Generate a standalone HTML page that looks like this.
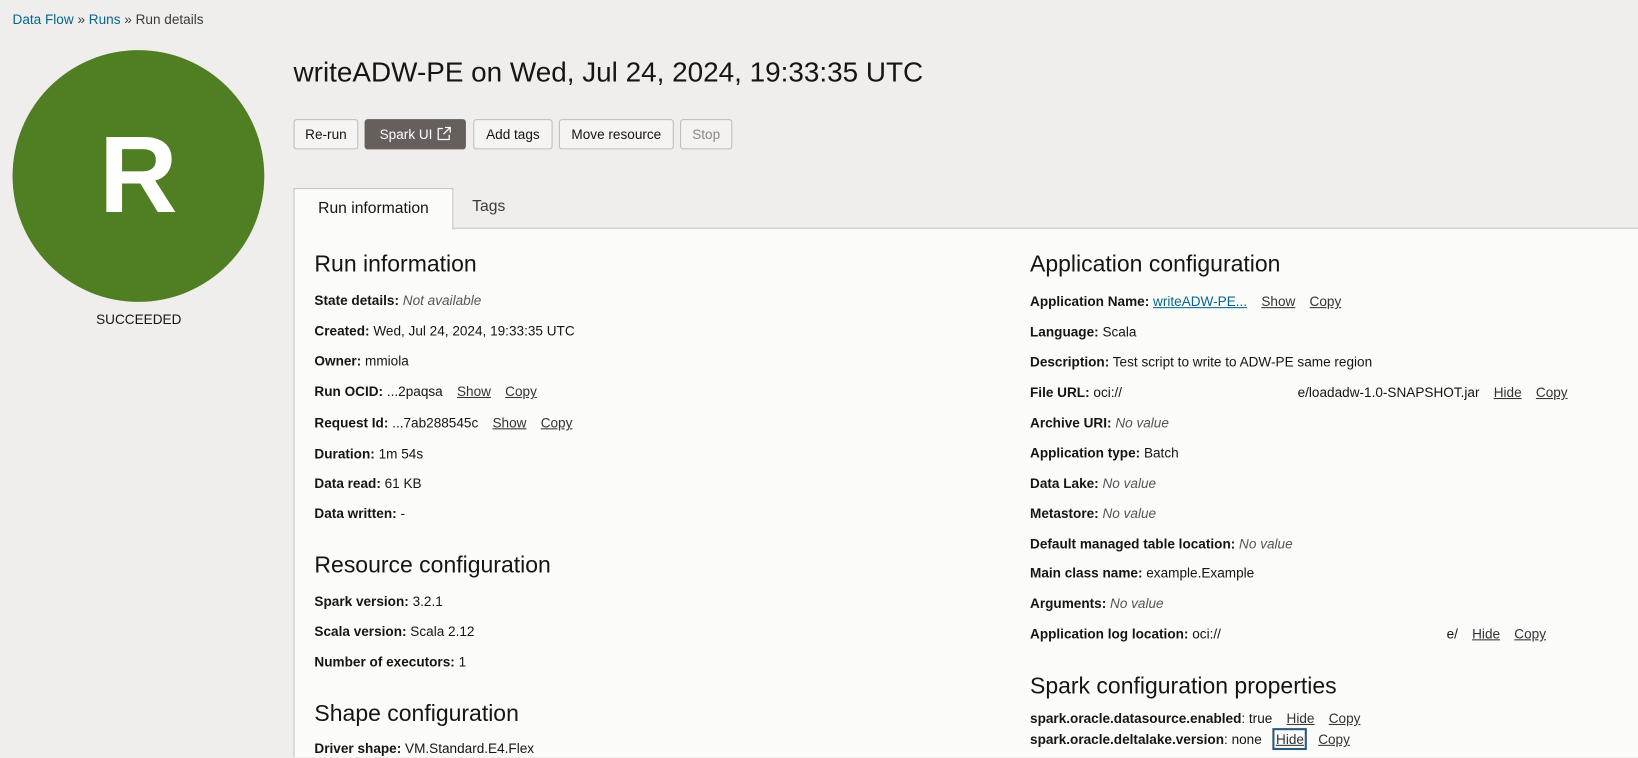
<!DOCTYPE html>
<html><head><meta charset="utf-8"><style>
*{margin:0;padding:0;box-sizing:border-box}
html,body{width:1638px;height:758px;overflow:hidden;background:#efeeec}
#w{position:absolute;left:0;top:0;width:1568px;height:725px;transform:scale(1.04464);transform-origin:0 0;font-family:"Liberation Sans",sans-serif;color:#161513;overflow:hidden}
.a{position:absolute;white-space:nowrap}
.bc{left:12px;top:11px;font-size:13px;color:#3a3a3a}
.bc a{color:#04668c;text-decoration:none}
.circle{left:12px;top:48px;width:241px;height:241px;border-radius:50%;background:#4f7e23;color:#fff;font-size:104px;font-weight:bold;text-align:center;line-height:241px}
.succ{left:92px;top:298px;font-size:13px;color:#161513}
h1{position:absolute;left:281px;top:54px;font-size:26.7px;font-weight:normal;white-space:nowrap}
.btn{position:absolute;top:114px;height:29px;border:1px solid #bfbdb8;border-radius:3px;background:#f5f4f2;font-size:13px;line-height:27px;text-align:center;color:#161513}
.tab{left:281px;top:180px;width:153px;height:40px;border:1px solid #c6c4bf;border-bottom:none;background:#fbfbfa;font-size:15px;text-align:center;line-height:38px;z-index:2}
.panel{left:281px;top:218px;width:1287px;height:507px;border-left:1px solid #c6c4bf;border-top:1px solid #c6c4bf;background:#fbfbfa}
h2{position:absolute;font-size:22px;font-weight:normal;white-space:nowrap}
.r{position:absolute;font-size:13px;white-space:nowrap}
.r b{font-weight:bold}
.r i{color:#555}
.l{color:#333;text-decoration:underline;margin-left:10px}
.lk{color:#04668c;text-decoration:underline}
</style></head><body><div id="w">
<div class="a bc"><a>Data Flow</a> » <a>Runs</a> » Run details</div>
<div class="a circle">R</div>
<div class="a succ">SUCCEEDED</div>
<h1>writeADW-PE on Wed, Jul 24, 2024, 19:33:35 UTC</h1>
<div class="btn" style="left:281px;width:62px">Re-run</div>
<div class="btn" style="left:349px;width:97px;background:#665f5b;border-color:#665f5b;color:#fff">Spark UI <svg width="14" height="14" viewBox="0 0 14 14" style="vertical-align:-2px"><path d="M6 2H1.5v10.5H12V8M8 1h5v5M13 1L6.5 7.5" fill="none" stroke="#fff" stroke-width="1.2"/></svg></div>
<div class="btn" style="left:453px;width:76px">Add tags</div>
<div class="btn" style="left:535px;width:110px">Move resource</div>
<div class="btn" style="left:651px;width:50px;color:#8a8886;background:#f3f2f0">Stop</div>
<div class="a tab">Run information</div>
<div class="a" style="left:452px;top:189px;font-size:15px;color:#3a3a3a">Tags</div>
<div class="a panel"></div>

<h2 style="left:301px;top:240px">Run information</h2>
<div class="r" style="left:301px;top:280px"><b>State details:</b> <i>Not available</i></div>
<div class="r" style="left:301px;top:309px"><b>Created:</b> Wed, Jul 24, 2024, 19:33:35 UTC</div>
<div class="r" style="left:301px;top:338px"><b>Owner:</b> mmiola</div>
<div class="r" style="left:301px;top:367px"><b>Run OCID:</b> ...2paqsa <span class="l">Show</span> <span class="l">Copy</span></div>
<div class="r" style="left:301px;top:397px"><b>Request Id:</b> ...7ab288545c <span class="l">Show</span> <span class="l">Copy</span></div>
<div class="r" style="left:301px;top:427px"><b>Duration:</b> 1m 54s</div>
<div class="r" style="left:301px;top:455px"><b>Data read:</b> 61 KB</div>
<div class="r" style="left:301px;top:484px"><b>Data written:</b> -</div>
<h2 style="left:301px;top:528px">Resource configuration</h2>
<div class="r" style="left:301px;top:568px"><b>Spark version:</b> 3.2.1</div>
<div class="r" style="left:301px;top:597px"><b>Scala version:</b> Scala 2.12</div>
<div class="r" style="left:301px;top:626px"><b>Number of executors:</b> 1</div>
<h2 style="left:301px;top:670px">Shape configuration</h2>
<div class="r" style="left:301px;top:709px"><b>Driver shape:</b> VM.Standard.E4.Flex</div>

<h2 style="left:986px;top:240px">Application configuration</h2>
<div class="r" style="left:986px;top:281px"><b>Application Name:</b> <span class="lk">writeADW-PE...</span> <span class="l">Show</span> <span class="l">Copy</span></div>
<div class="r" style="left:986px;top:310px"><b>Language:</b> Scala</div>
<div class="r" style="left:986px;top:339px"><b>Description:</b> Test script to write to ADW-PE same region</div>
<div class="r" style="left:986px;top:368px"><b>File URL:</b> oci://<span style="display:inline-block;width:168px"></span>e/loadadw-1.0-SNAPSHOT.jar <span class="l">Hide</span> <span class="l">Copy</span></div>
<div class="r" style="left:986px;top:397px"><b>Archive URI:</b> <i>No value</i></div>
<div class="r" style="left:986px;top:426px"><b>Application type:</b> Batch</div>
<div class="r" style="left:986px;top:455px"><b>Data Lake:</b> <i>No value</i></div>
<div class="r" style="left:986px;top:484px"><b>Metastore:</b> <i>No value</i></div>
<div class="r" style="left:986px;top:513px"><b>Default managed table location:</b> <i>No value</i></div>
<div class="r" style="left:986px;top:541px"><b>Main class name:</b> example.Example</div>
<div class="r" style="left:986px;top:570px"><b>Arguments:</b> <i>No value</i></div>
<div class="r" style="left:986px;top:599px"><b>Application log location:</b> oci://<span style="display:inline-block;width:216px"></span>e/ <span class="l">Hide</span> <span class="l">Copy</span></div>
<h2 style="left:986px;top:644px">Spark configuration properties</h2>
<div class="r" style="left:986px;top:680px"><b>spark.oracle.datasource.enabled</b>: true <span class="l">Hide</span> <span class="l">Copy</span></div>
<div class="r" style="left:986px;top:700px"><b>spark.oracle.deltalake.version</b>: none <span class="l" style="outline:2px solid #2c5a7a;outline-offset:1px">Hide</span> <span class="l">Copy</span></div>
</div></body></html>
